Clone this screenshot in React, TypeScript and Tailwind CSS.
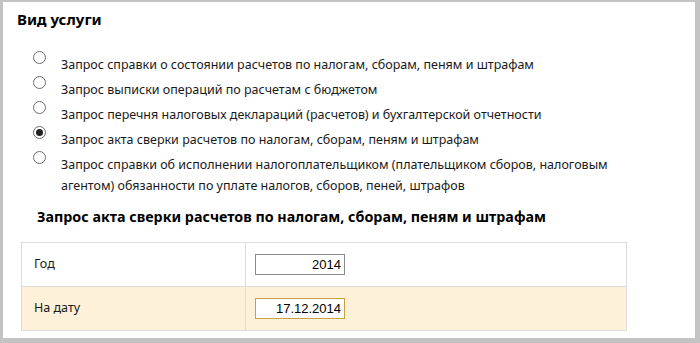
import React from 'react'

const options = [
  ['Запрос справки о состоянии расчетов по налогам, сборам, пеням и штрафам'],
  ['Запрос выписки операций по расчетам с бюджетом'],
  ['Запрос перечня налоговых деклараций (расчетов) и бухгалтерской отчетности'],
  ['Запрос акта сверки расчетов по налогам, сборам, пеням и штрафам'],
  [
    'Запрос справки об исполнении налогоплательщиком (плательщиком сборов, налоговым',
    'агентом) обязанности по уплате налогов, сборов, пеней, штрафов',
  ],
]

const Radio = ({ checked }: { checked: boolean }) => (
  <span className="mt-[1px] flex h-[13px] w-[13px] shrink-0 items-center justify-center rounded-full border border-[#6d6d6d] bg-white">
    {checked && <span className="h-[7px] w-[7px] rounded-full bg-[#222]" />}
  </span>
)

export default function App() {
  return (
    <div
      className="h-[343px] w-[700px] overflow-hidden border-b-[5px] border-l-[3px] border-r-[5px] border-t-[2px] border-[#c3c3c3] bg-white text-[#1a1a1a]"
      style={{ fontFamily: '"Noto Sans", "Open Sans", sans-serif' }}
    >
      <h2 className="pl-[14px] pt-[7px] text-[15px] font-bold leading-[20px] text-black">Вид услуги</h2>

      <div className="mt-[21px] flex flex-col pl-[30px]">
        {options.map((lines, i) => (
          <div key={i} className="flex items-start gap-[15px]">
            <Radio checked={i === 3} />
            <div className="pt-[4px] text-[12.5px] leading-[21px]">
              {lines.map((l) => (
                <div key={l}>{l}</div>
              ))}
            </div>
          </div>
        ))}
      </div>

      <h3 className="mt-[11px] pl-[34px] text-[14.3px] font-bold leading-[20px] text-black">
        Запрос акта сверки расчетов по налогам, сборам, пеням и штрафам
      </h3>

      <div className="ml-[18px] mt-[15px] w-[606px] border border-[#dcdcdc] text-[12.5px]">
        <div className="flex h-[44px] border-b border-[#dcdcdc]">
          <div className="flex w-[224px] items-center border-r border-[#dcdcdc] pl-[12px]">Год</div>
          <div className="flex items-center pl-[9px]">
            <div
              className="flex h-[21px] w-[90px] items-center justify-end border border-[#8a8a8a] bg-white pr-[3px] text-[13px] text-black"
              style={{ fontFamily: '"Liberation Sans", Arial, sans-serif' }}
            >
              2014
            </div>
          </div>
        </div>
        <div className="flex h-[43px] bg-[#fdf1d9]">
          <div className="flex w-[224px] items-center border-r border-[#dcdcdc] pl-[12px]">На дату</div>
          <div className="flex items-center pl-[9px]">
            <div
              className="flex h-[21px] w-[90px] items-center justify-end border border-[#c9a23f] bg-white pr-[3px] text-[13px] text-black"
              style={{ fontFamily: '"Liberation Sans", Arial, sans-serif' }}
            >
              17.12.2014
            </div>
          </div>
        </div>
      </div>
    </div>
  )
}
